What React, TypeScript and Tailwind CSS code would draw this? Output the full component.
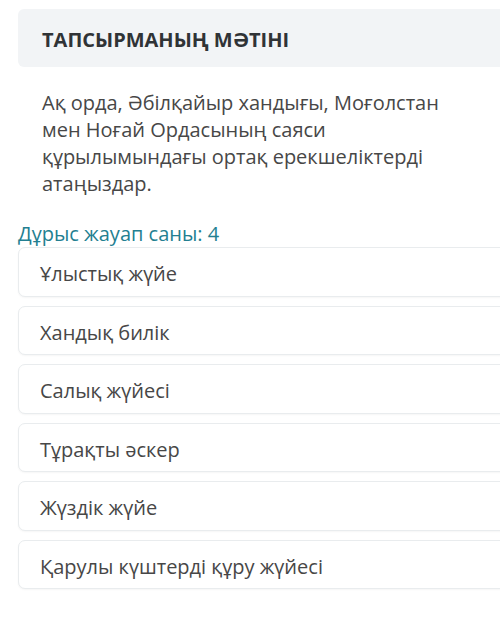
import React from "react";

const options = [
  "Ұлыстық жүйе",
  "Хандық билік",
  "Салық жүйесі",
  "Тұрақты әскер",
  "Жүздік жүйе",
  "Қарулы күштерді құру жүйесі",
];

export default function App() {
  return (
    <div
      className="w-[500px] h-[635px] overflow-hidden bg-white"
      style={{ fontFamily: '"Open Sans", "Noto Sans", sans-serif' }}
    >
      <div className="pt-[9px] pl-[18px] w-[540px]">
        <div className="h-[58px] rounded-[6px] bg-[#f2f4f6] pl-[24px] pt-[17px]">
          <div className="text-[20px] leading-[27px] font-bold text-[#303336]">
            ТАПСЫРМАНЫҢ МӘТІНІ
          </div>
        </div>
        <p className="mt-[22px] pl-[24px] text-[20px] leading-[27px] text-[#474747] w-[446px]">
          Ақ орда, Әбілқайыр хандығы, Моғолстан мен Ноғай Ордасының саяси
          құрылымындағы ортақ ерекшеліктерді атаңыздар.
        </p>
        <div className="mt-[23px] text-[20px] leading-[27px] text-[#237f91]">
          Дұрыс жауап саны: 4
        </div>
        <div className="flex flex-col gap-[9px]">
          {options.map((o) => (
            <div
              key={o}
              className="h-[49.5px] rounded-[7px] border border-[#e9ecee] bg-white shadow-[0_1px_2px_rgba(0,0,0,0.04)] pl-[21px] pt-[12px] text-[20px] leading-[27px] text-[#474747]"
            >
              {o}
            </div>
          ))}
        </div>
      </div>
    </div>
  );
}
